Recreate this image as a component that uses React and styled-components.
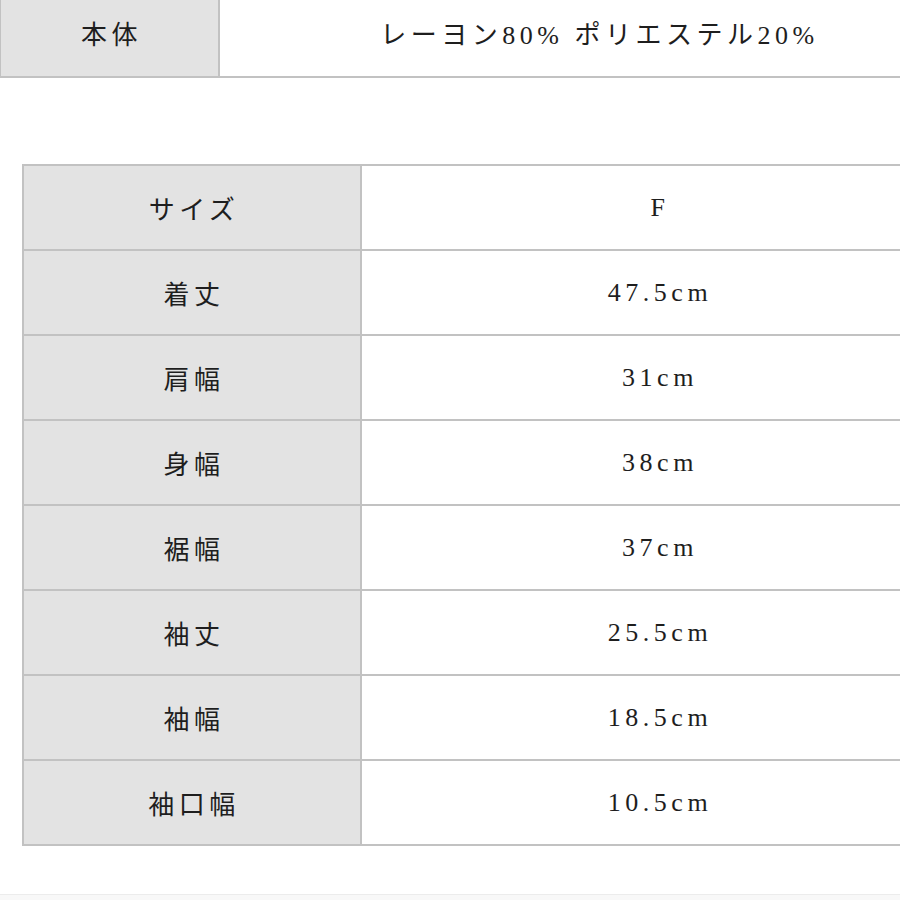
import React from "react";
import styled, { createGlobalStyle } from "styled-components";

const GlobalStyle = createGlobalStyle`
  html, body {
    margin: 0;
    padding: 0;
    background: #ffffff;
    overflow: hidden;
  }
  body {
    font-family: "Liberation Serif", "Noto Sans CJK JP", serif;
    color: #1e1e1e;
  }
`;

const Page = styled.div`
  width: 900px;
  height: 900px;
  overflow: hidden;
  display: flex;
  flex-direction: column;
`;

const Table = styled.table`
  border-collapse: collapse;
  table-layout: fixed;
  width: ${(p) => p.$width}px;
  margin: ${(p) => p.$margin};
  flex-shrink: 0;
`;

const Row = styled.tr`
  height: ${(p) => p.$height}px;
`;

const LabelCell = styled.td`
  box-sizing: border-box;
  width: ${(p) => p.$width}px;
  background: #e3e3e3;
  border: 2px solid #c2c2c2;
  text-align: center;
  vertical-align: middle;
  font-size: 26px;
  letter-spacing: 4.5px;
  padding: 0 0 0 4px;
`;

const ValueCell = styled.td`
  box-sizing: border-box;
  background: #ffffff;
  border: 2px solid #c2c2c2;
  border-right: none;
  text-align: center;
  vertical-align: middle;
  font-size: 26px;
  letter-spacing: 4.5px;
  padding: 0 0 0 4px;
`;

const Divider = styled.div`
  margin-top: 48px;
  height: 6px;
  border-top: 1px solid #ececec;
  background: #f8f8f8;
  flex-shrink: 0;
`;

const sizes = [
  ["サイズ", "F"],
  ["着丈", "47.5cm"],
  ["肩幅", "31cm"],
  ["身幅", "38cm"],
  ["裾幅", "37cm"],
  ["袖丈", "25.5cm"],
  ["袖幅", "18.5cm"],
  ["袖口幅", "10.5cm"],
];

export default function App() {
  return (
    <>
      <GlobalStyle />
      <Page>
        <Table $width={976} $margin="-14px 0 0 -1px">
          <tbody>
            <Row $height={90}>
              <LabelCell $width={219}>本体</LabelCell>
              <ValueCell>レーヨン80% ポリエステル20%</ValueCell>
            </Row>
          </tbody>
        </Table>
        <Table $width={932} $margin="86px 0 0 22px">
          <tbody>
            {sizes.map(([label, value]) => (
              <Row key={label} $height={85}>
                <LabelCell $width={338}>{label}</LabelCell>
                <ValueCell>{value}</ValueCell>
              </Row>
            ))}
          </tbody>
        </Table>
        <Divider />
      </Page>
    </>
  );
}
